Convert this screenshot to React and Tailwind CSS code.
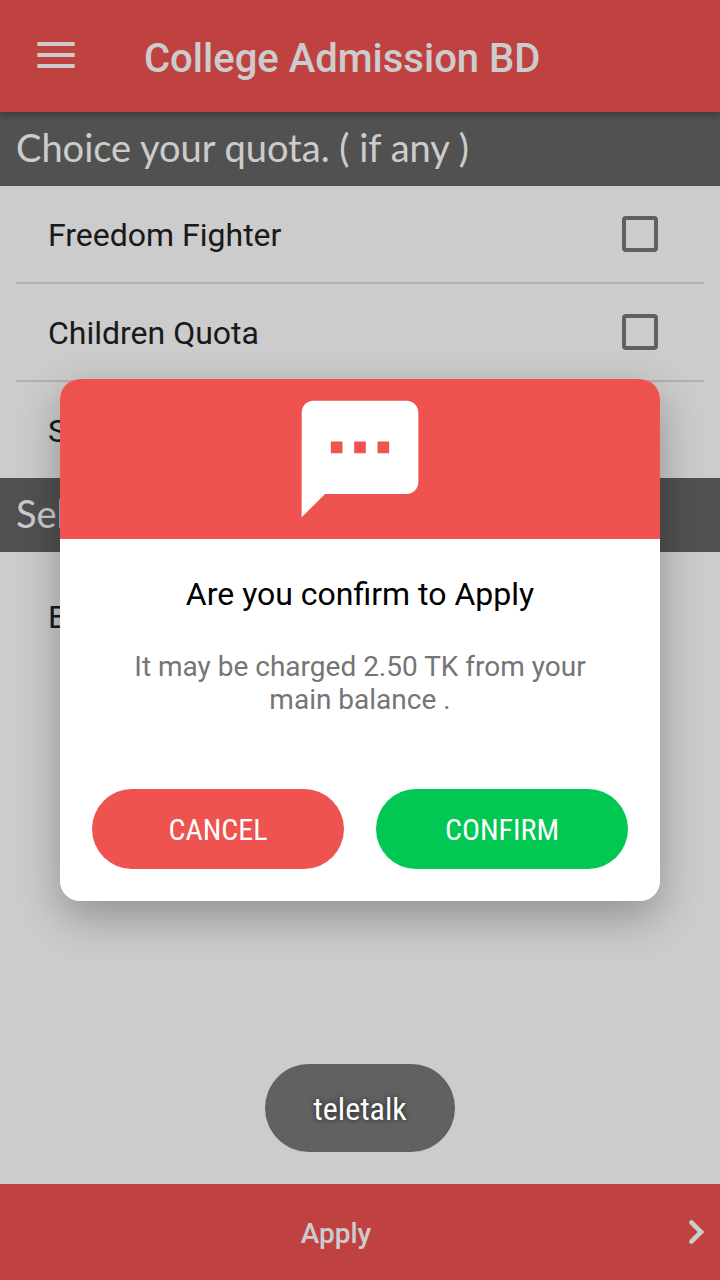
import { MdSms } from "react-icons/md";

const quotas = ["Freedom Fighter", "Children Quota", "Sports Quota"];

function MenuIcon() {
  return (
    <svg width="38" height="26" viewBox="0 0 38 26" fill="currentColor" aria-hidden="true">
      <rect x="0.3" width="37.4" height="4" />
      <rect x="0.3" y="11" width="37.4" height="4" />
      <rect x="0.3" y="22" width="37.4" height="4" />
    </svg>
  );
}

function ChevronIcon() {
  return (
    <svg
      width="48"
      height="48"
      viewBox="0 0 48 48"
      fill="none"
      stroke="currentColor"
      strokeWidth="4.6"
      strokeLinecap="round"
      aria-hidden="true"
    >
      <path d="M19.4 14.4 L29 24 L19.4 33.6" />
    </svg>
  );
}

function SectionTitle({ children }) {
  return (
    <h2 className="flex h-[74px] items-center bg-[#666666] px-4 pb-1 font-['Lato',sans-serif] text-[38px] text-white">
      {children}
    </h2>
  );
}

function QuotaRow({ label }) {
  return (
    <li>
      <label className="flex h-24 items-center justify-between pr-[46px] pl-8">
        <span className="pt-0.5">{label}</span>
        <input
          type="checkbox"
          className="size-9 appearance-none rounded-sm border-4 border-[#777777] checked:bg-[#ef5350]"
        />
      </label>
    </li>
  );
}

function ConfirmDialog() {
  return (
    <div
      role="dialog"
      aria-labelledby="confirm-title"
      className="w-full max-w-[600px] overflow-hidden rounded-[20px] bg-white shadow-[0_16px_44px_rgba(0,0,0,0.29)]"
    >
      <div className="flex h-40 items-center justify-center bg-[#ef5350] text-white">
        <MdSms size={140} />
      </div>
      <div className="flex flex-col px-8 pt-9 pb-8 text-center">
        <h2 id="confirm-title" className="text-[32px] leading-[38px] text-black">
          Are you confirm to Apply
        </h2>
        <p className="mt-[37px] px-8 text-[28px] leading-[33px] text-[#757575]">
          It may be charged 2.50 TK from your main balance .
        </p>
        <div className="mt-[73px] grid grid-cols-2 gap-8 font-['Roboto_Condensed','Roboto',sans-serif] text-[30px] text-white">
          <button type="button" className="h-20 rounded-full bg-[#ef5350]">
            CANCEL
          </button>
          <button type="button" className="h-20 rounded-full bg-[#00c853]">
            CONFIRM
          </button>
        </div>
      </div>
    </div>
  );
}

export default function App() {
  return (
    <div className="relative flex min-h-screen flex-col bg-white font-['Roboto',sans-serif] text-[32px] text-[#212121]">
      <header className="relative flex h-28 items-center bg-[#ef5350] text-white shadow-[0_3px_8px_rgba(0,0,0,0.3)]">
        <button type="button" aria-label="Open menu" className="flex h-28 w-28 items-center justify-center pb-0.5">
          <MenuIcon />
        </button>
        <h1 className="pt-1.5 pl-8 text-[40px] font-medium">College Admission BD</h1>
      </header>

      <main className="grow">
        <SectionTitle>Choice your quota. ( if any )</SectionTitle>
        <ul className="mx-4 divide-y-2 divide-[#dedede]">
          {quotas.map((label) => (
            <QuotaRow key={label} label={label} />
          ))}
        </ul>
        <SectionTitle>Select your version</SectionTitle>
        <ul className="mx-4 mt-4">
          <QuotaRow label="Bangla" />
        </ul>
      </main>

      <footer>
        <button
          type="button"
          className="flex h-24 w-full items-center bg-[#ef5350] text-[28px] font-medium text-white"
        >
          <span className="grow pt-1">Apply</span>
          <ChevronIcon />
        </button>
      </footer>

      <div className="absolute inset-0 flex items-center justify-center bg-black/20 px-[60px]">
        <ConfirmDialog />
      </div>

      <div className="pointer-events-none absolute inset-x-0 bottom-32 flex justify-center">
        <div
          role="status"
          className="flex h-[88px] items-center rounded-full bg-[#616161] px-12 pt-0.5 font-['Roboto_Condensed','Roboto',sans-serif] text-[32px] text-white [text-shadow:0_0_5px_rgba(0,0,0,0.7)]"
        >
          teletalk
        </div>
      </div>
    </div>
  );
}
